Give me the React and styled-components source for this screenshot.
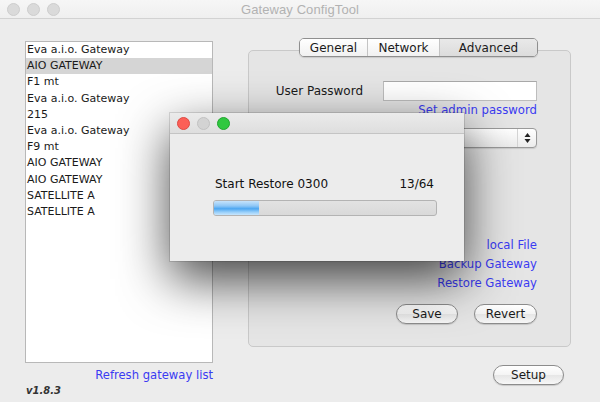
import React from "react";
import styled, { createGlobalStyle } from "styled-components";

const GlobalStyle = createGlobalStyle`
  html, body {
    margin: 0;
    padding: 0;
    background: #ececec;
  }
  body {
    font-family: "DejaVu Sans", "Liberation Sans", sans-serif;
  }
`;

const gateways = [
  "Eva a.i.o. Gateway",
  "AIO GATEWAY",
  "F1 mt",
  "Eva a.i.o. Gateway",
  "215",
  "Eva a.i.o. Gateway",
  "F9 mt",
  "AIO GATEWAY",
  "AIO GATEWAY",
  "SATELLITE A",
  "SATELLITE A",
];

function App() {
  const done = 13;
  const total = 64;

  return (
    <Wrapper>
      <GlobalStyle />
      <TitleBar>
        <Lights>
          <Light />
          <Light />
          <Light />
        </Lights>
        <Title>Gateway ConfigTool</Title>
      </TitleBar>

      <Body>
        <LeftColumn>
          <ListBox>
            {gateways.map((name, i) => (
              <ListRow key={i} selected={i === 1}>
                {name}
              </ListRow>
            ))}
          </ListBox>
          <RefreshLink>Refresh gateway list</RefreshLink>
          <Version>v1.8.3</Version>
        </LeftColumn>

        <RightColumn>
          <Tabs>
            <Tab width={67}>General</Tab>
            <Tab width={72}>Network</Tab>
            <Tab width={98} active>
              Advanced
            </Tab>
          </Tabs>
          <Panel>
            <FieldRow>
              <Label>User Password</Label>
              <TextInput />
            </FieldRow>
            <PanelLink>Set admin password</PanelLink>
            <SelectBox>
              <SelectArrows>
                <svg width="7" height="12" viewBox="0 0 7 12">
                  <path d="M3.5 1 L6.5 5 L0.5 5 Z" fill="#222" />
                  <path d="M3.5 11 L6.5 7 L0.5 7 Z" fill="#222" />
                </svg>
              </SelectArrows>
            </SelectBox>
            <LinkStack>
              <PanelLink>
                <HiddenWord>Restore from</HiddenWord>local File
              </PanelLink>
              <PanelLink>Backup Gateway</PanelLink>
              <PanelLink>Restore Gateway</PanelLink>
            </LinkStack>
            <ButtonRow>
              <PillButton width={62}>Save</PillButton>
              <PillButton width={63}>Revert</PillButton>
            </ButtonRow>
          </Panel>
          <SetupRow>
            <PillButton width={71}>Setup</PillButton>
          </SetupRow>
        </RightColumn>
      </Body>

      <Dialog>
        <DialogBar>
          <DialogLight color="#fc5f57" border="#de4a43" />
          <DialogLight color="#d3d3d3" border="#c2c2c2" />
          <DialogLight color="#30c840" border="#22a52f" />
        </DialogBar>
        <DialogBody>
          <StatusRow>
            <span>Start Restore 0300</span>
            <span>
              {done}/{total}
            </span>
          </StatusRow>
          <ProgressTrack>
            <ProgressFill style={{ width: `${(done / total) * 100}%` }} />
          </ProgressTrack>
        </DialogBody>
      </Dialog>
    </Wrapper>
  );
}

const Wrapper = styled.div`
  position: relative;
  width: 600px;
  height: 402px;
  overflow: hidden;
  background: #ececec;
  color: #1a1a1a;
`;

const TitleBar = styled.div`
  position: relative;
  height: 18px;
  display: flex;
  align-items: center;
  justify-content: center;
  background: linear-gradient(#f6f6f6, #efefef);
  border-bottom: 1px solid #d2d2d2;
`;

const Lights = styled.div`
  position: absolute;
  left: 7px;
  top: 3px;
  display: flex;
  gap: 7px;
`;

const Light = styled.div`
  width: 11px;
  height: 11px;
  border-radius: 50%;
  background: #dadada;
  border: 1px solid #cdcdcd;
`;

const Title = styled.div`
  font-family: "Liberation Sans", Arial, sans-serif;
  font-size: 13px;
  color: #b2b2b2;
  letter-spacing: 0.1px;
`;

const Body = styled.div`
  display: flex;
  gap: 35px;
  padding: 19px 29px 0 25px;
`;

const LeftColumn = styled.div`
  width: 188px;
  display: flex;
  flex-direction: column;
  padding-top: 3px;
`;

const ListBox = styled.div`
  height: 320px;
  background: #fff;
  border: 1px solid #b8b8b8;
  font-size: 11px;
`;

const ListRow = styled.div`
  height: 16.2px;
  line-height: 16.2px;
  padding-left: 1px;
  white-space: nowrap;
  background: ${(p) => (p.selected ? "#d5d5d5" : "transparent")};
`;

const RefreshLink = styled.div`
  margin-top: 5px;
  text-align: right;
  font-size: 11.6px;
  line-height: 14px;
  color: #3b3bf2;
`;

const Version = styled.div`
  margin-top: 3px;
  margin-left: 1px;
  font-size: 10px;
  font-weight: bold;
  font-style: italic;
  color: #333;
`;

const RightColumn = styled.div`
  flex: 1;
  display: flex;
  flex-direction: column;
`;

const Tabs = styled.div`
  position: relative;
  z-index: 1;
  align-self: flex-start;
  margin-left: 51px;
  margin-bottom: -7px;
  display: flex;
  height: 17px;
  border: 1px solid #8f8f8f;
  border-radius: 5px;
  overflow: hidden;
  box-shadow: 0 1px 1px rgba(0, 0, 0, 0.12);
`;

const Tab = styled.div`
  box-sizing: border-box;
  width: ${(p) => p.width}px;
  display: flex;
  align-items: center;
  justify-content: center;
  font-size: 12px;
  color: #1a1a1a;
  background: ${(p) =>
    p.active
      ? "linear-gradient(#e9e9e9, #dcdcdc)"
      : "linear-gradient(#ffffff, #f1f1f1)"};
  & + & {
    border-left: 1px solid #c4c4c4;
  }
`;

const Panel = styled.div`
  height: 265px;
  padding: 30px 33px 0 0;
  background: #e5e5e5;
  border: 1px solid #c9c9c9;
  border-radius: 5px;
  display: flex;
  flex-direction: column;
  align-items: flex-end;
`;

const FieldRow = styled.div`
  display: flex;
  align-items: center;
  gap: 20px;
`;

const Label = styled.div`
  font-size: 12px;
  color: #1a1a1a;
`;

const TextInput = styled.div`
  width: 152px;
  height: 18px;
  background: #fff;
  border: 1px solid #bdbdbd;
  border-top-color: #a8a8a8;
`;

const PanelLink = styled.div`
  font-size: 11.7px;
  line-height: 19px;
  color: #3b3bf2;
  white-space: nowrap;
`;

const HiddenWord = styled.span`
  margin-right: 26px;
`;

const SelectBox = styled.div`
  margin-top: 8px;
  width: 152px;
  height: 18px;
  border: 1px solid #9a9a9a;
  border-radius: 4px;
  background: linear-gradient(#ffffff, #ececec);
  display: flex;
  justify-content: flex-end;
  box-shadow: 0 1px 1px rgba(0, 0, 0, 0.12);
`;

const SelectArrows = styled.div`
  width: 18px;
  display: flex;
  align-items: center;
  justify-content: center;
  border-left: 1px solid #d4d4d4;
`;

const LinkStack = styled.div`
  margin-top: 88px;
  display: flex;
  flex-direction: column;
  align-items: flex-end;
`;

const ButtonRow = styled.div`
  margin-top: 11px;
  display: flex;
  gap: 16px;
`;

const PillButton = styled.div`
  width: ${(p) => p.width}px;
  box-sizing: border-box;
  height: 20px;
  display: flex;
  align-items: center;
  justify-content: center;
  font-size: 12px;
  color: #1a1a1a;
  border: 1px solid #8c8c8c;
  border-radius: 10px;
  background: linear-gradient(#ffffff 0%, #f4f4f4 50%, #e6e6e6 51%, #f7f7f7 100%);
  box-shadow: 0 1px 1px rgba(0, 0, 0, 0.15);
`;

const SetupRow = styled.div`
  margin-top: 18px;
  padding-right: 7px;
  display: flex;
  justify-content: flex-end;
`;

const Dialog = styled.div`
  position: absolute;
  left: 170px;
  top: 113px;
  width: 294px;
  height: 148px;
  background: #ececec;
  display: flex;
  flex-direction: column;
  box-shadow: 0 18px 50px rgba(0, 0, 0, 0.72), 0 0 0 1px rgba(0, 0, 0, 0.12);
`;

const DialogBar = styled.div`
  height: 20px;
  display: flex;
  align-items: center;
  gap: 7px;
  padding-left: 7px;
  background: linear-gradient(#ebebeb, #dedede);
  border-bottom: 1px solid #c4c4c4;
`;

const DialogLight = styled.div`
  width: 11px;
  height: 11px;
  border-radius: 50%;
  background: ${(p) => p.color};
  border: 1px solid ${(p) => p.border};
`;

const DialogBody = styled.div`
  padding: 42px 27px 0 43px;
`;

const StatusRow = styled.div`
  display: flex;
  justify-content: space-between;
  font-size: 12px;
  line-height: 16px;
  color: #111;
  padding: 0 3px 0 2px;
`;

const ProgressTrack = styled.div`
  margin-top: 8px;
  height: 14px;
  border: 1px solid #b3b3b3;
  border-radius: 3px;
  background: linear-gradient(#e2e2e2, #d9d9d9);
  overflow: hidden;
`;

const ProgressFill = styled.div`
  height: 100%;
  background: linear-gradient(
    #c6e3fb 0%,
    #8fc7f6 35%,
    #4ea7f1 55%,
    #9ad0fa 80%,
    #c8e6fd 100%
  );
`;

export default App;
